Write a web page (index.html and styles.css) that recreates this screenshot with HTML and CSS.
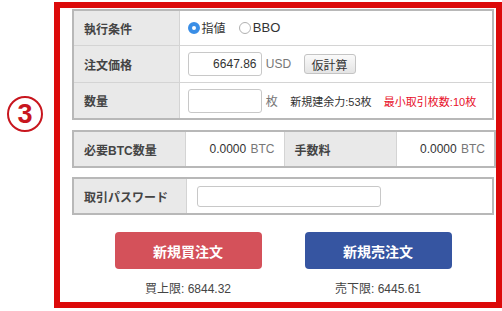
FILE: index.html
```html
<!DOCTYPE html>
<html lang="ja">
<head>
  <meta charset="UTF-8" />
  <title>注文</title>
  <link rel="stylesheet" href="styles.css">
</head>
<body>

<div class="page">
  <div class="side">
    <span class="step">3</span>
  </div>

  <div class="frame">
    <table class="form main">
      <colgroup><col class="lab"><col></colgroup>
      <tr>
        <th>執行条件</th>
        <td>
          <label class="radio"><span class="dot on"></span>指値</label>
          <label class="radio"><span class="dot"></span><span class="en">BBO</span></label>
        </td>
      </tr>
      <tr>
        <th>注文価格</th>
        <td>
          <input class="field num" type="text" value="6647.86">
          <span class="unit">USD</span>
          <button class="calc">仮計算</button>
        </td>
      </tr>
      <tr>
        <th>数量</th>
        <td>
          <input class="field num" type="text" value="">
          <span class="unit">枚</span>
          <span class="note">新規建余力:53枚</span>
          <span class="note red">最小取引枚数:10枚</span>
        </td>
      </tr>
    </table>

    <table class="form cost">
      <colgroup><col class="lab2"><col class="val"><col class="lab2"><col class="val"></colgroup>
      <tr>
        <th>必要BTC数量</th>
        <td class="amount">0.0000 <span class="unit">BTC</span></td>
        <th>手数料</th>
        <td class="amount">0.0000 <span class="unit">BTC</span></td>
      </tr>
    </table>

    <table class="form pass">
      <colgroup><col class="lab3"><col></colgroup>
      <tr>
        <th>取引パスワード</th>
        <td><input class="field pw" type="password"></td>
      </tr>
    </table>

    <div class="actions">
      <div class="action">
        <button class="btn buy">新規買注文</button>
        <div class="limit">買上限: 6844.32</div>
      </div>
      <div class="action">
        <button class="btn sell">新規売注文</button>
        <div class="limit">売下限: 6445.61</div>
      </div>
    </div>
  </div>
</div>

</body>
</html>
```

FILE: styles.css
```css
body {
  margin: 0;
  background: #fff;
  font-family: "Liberation Sans", "Noto Sans CJK JP", sans-serif;
  color: #333;
}
.page {
  display: flex;
  align-items: flex-start;
}
.side {
  width: 54px;
  flex: none;
  padding-top: 96px;
  padding-left: 7px;
  box-sizing: border-box;
}
.step {
  display: flex;
  align-items: center;
  justify-content: center;
  width: 36px;
  height: 36px;
  box-sizing: border-box;
  border: 2px solid #c8161e;
  border-radius: 50%;
  color: #c8161e;
  font-size: 27px;
  font-weight: bold;
  line-height: 1;
}
.frame {
  margin-top: 2px;
  width: 448px;
  height: 306px;
  flex: none;
  box-sizing: border-box;
  border: 6px solid #dc0a0a;
  padding: 1px 0 0 12px;
}
.form {
  width: 422px;
  border-collapse: collapse;
  table-layout: fixed;
  border: 2px solid #b8b8b8;
  font-size: 12px;
}
.form th,
.form td {
  border: 1px solid #d4d4d4;
  padding: 0 0 0 10px;
  vertical-align: middle;
  white-space: nowrap;
}
.form th {
  background: #e9e9e9;
  text-align: left;
  font-weight: bold;
  color: #444;
}
.lab { width: 106px; }
.lab2 { width: 112px; }
.val { width: 99px; }
.lab3 { width: 113px; }

.main tr:nth-child(1) td, .main tr:nth-child(1) th { height: 34px; }
.main tr:nth-child(2) td, .main tr:nth-child(2) th { height: 36px; }
.main tr:nth-child(3) td, .main tr:nth-child(3) th { height: 35px; }
.main td { padding-left: 8px; }

.cost { margin-top: 10px; }
.cost th, .cost td { height: 34px; }
.cost .amount {
  text-align: right;
  padding-right: 9px;
  font-size: 12px;
  color: #333;
}
.pass { margin-top: 9px; }
.pass th, .pass td { height: 34px; }

.radio {
  display: inline-flex;
  align-items: center;
  margin-right: 10px;
  font-size: 12px;
  color: #333;
}
.radio .en { font-size: 13px; }
.dot {
  width: 12px;
  height: 12px;
  box-sizing: border-box;
  border: 1px solid #b0b0b0;
  border-radius: 50%;
  margin-right: 2px;
  background: #fff;
}
.dot.on {
  border: 4px solid #3a8ee6;
  background: #fff;
}
.field {
  height: 24px;
  box-sizing: border-box;
  border: 1px solid #c8c8c8;
  border-radius: 3px;
  font-family: inherit;
  font-size: 12px;
  color: #333;
  vertical-align: middle;
  padding: 0 4px;
}
.num {
  width: 74px;
  text-align: right;
}
.pw {
  width: 184px;
  height: 21px;
}
.unit {
  color: #777;
  margin-left: 1px;
  vertical-align: middle;
}
.calc {
  margin-left: 9px;
  height: 20px;
  width: 52px;
  padding: 0;
  border: 1px solid #c4c4c4;
  border-radius: 3px;
  background: linear-gradient(#fafafa, #e4e4e4);
  font-family: inherit;
  font-size: 12px;
  color: #333;
  vertical-align: middle;
}
.note {
  font-size: 11px;
  margin-left: 9px;
  vertical-align: middle;
}
.note.red { color: #e8102a; }

.actions {
  display: flex;
  justify-content: center;
  gap: 43px;
  width: 422px;
  margin-top: 17px;
}
.action {
  display: flex;
  flex-direction: column;
  align-items: center;
}
.btn {
  width: 147px;
  height: 37px;
  border: none;
  border-radius: 4px;
  color: #fff;
  font-family: inherit;
  font-size: 14px;
  font-weight: bold;
}
.buy { background: #d4515a; }
.sell { background: #3655a1; }
.limit {
  margin-top: 10px;
  font-size: 12px;
  color: #444;
}
```
